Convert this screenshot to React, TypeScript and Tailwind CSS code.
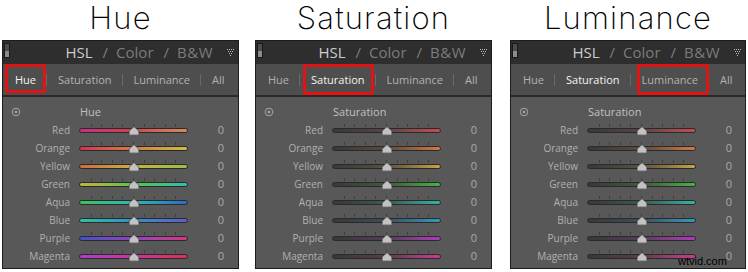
import React from "react";

type Row = { name: string; grad: string };

const hueRows: Row[] = [
  { name: "Red", grad: "bg-linear-to-r from-[#c82e7e] via-[#d0424c] to-[#d08c5e]" },
  { name: "Orange", grad: "bg-linear-to-r from-[#d6304e] via-[#d47a42] to-[#c8c040]" },
  { name: "Yellow", grad: "bg-linear-to-r from-[#d06a40] via-[#c8b040] to-[#98c048]" },
  { name: "Green", grad: "bg-linear-to-r from-[#bab63e] via-[#58c050] to-[#30c0a6]" },
  { name: "Aqua", grad: "bg-linear-to-r from-[#40c05a] via-[#30b8b0] to-[#3068c4]" },
  { name: "Blue", grad: "bg-linear-to-r from-[#30c0a0] via-[#3090c8] to-[#5c5cc6]" },
  { name: "Purple", grad: "bg-linear-to-r from-[#4050c8] via-[#9040c0] to-[#d83080]" },
  { name: "Magenta", grad: "bg-linear-to-r from-[#a640c6] via-[#d030a0] to-[#d83052]" },
];

const satRows: Row[] = [
  { name: "Red", grad: "bg-linear-to-r from-[#383838] via-[#5a4446] to-[#c84a52]" },
  { name: "Orange", grad: "bg-linear-to-r from-[#383838] via-[#5c4a3e] to-[#d27a42]" },
  { name: "Yellow", grad: "bg-linear-to-r from-[#383838] via-[#5a523e] to-[#caa440]" },
  { name: "Green", grad: "bg-linear-to-r from-[#383838] via-[#3e5a3e] to-[#44b444]" },
  { name: "Aqua", grad: "bg-linear-to-r from-[#383838] via-[#3a5854] to-[#30b4a4]" },
  { name: "Blue", grad: "bg-linear-to-r from-[#383838] via-[#3a5058] to-[#3298c2]" },
  { name: "Purple", grad: "bg-linear-to-r from-[#383838] via-[#543c58] to-[#b634c2]" },
  { name: "Magenta", grad: "bg-linear-to-r from-[#383838] via-[#583c4c] to-[#d43690]" },
];

const tabs = ["Hue", "Saturation", "Luminance", "All"];

function Thumb() {
  return (
    <svg
      width="11"
      height="10"
      viewBox="0 0 11 10"
      className="absolute left-1/2 top-[5px] -translate-x-1/2"
    >
      <path
        d="M5.5 0.6 L10.4 5 L10.4 8.6 Q10.4 9.4 9.6 9.4 L1.4 9.4 Q0.6 9.4 0.6 8.6 L0.6 5 Z"
        fill="#c2c2c2"
        stroke="#3c3c3c"
        strokeWidth="0.7"
      />
      <path d="M1.2 8.6 L9.8 8.6" stroke="#8e8e8e" strokeWidth="0.8" />
    </svg>
  );
}

function Slider({ grad }: { grad: string }) {
  return (
    <div className="relative w-[109px] h-[18px] flex flex-col pt-[3px] gap-[1px]">
      <div className="h-[3px] flex justify-evenly px-[2px]">
        {Array.from({ length: 9 }).map((_, i) => (
          <div key={i} className="w-px h-[3px] bg-[#3e3e3e]" />
        ))}
      </div>
      <div className={`h-[5px] rounded-full border border-[#2a2a2a] ${grad}`} />
      <Thumb />
    </div>
  );
}

function TargetIcon() {
  return (
    <svg width="10" height="10" viewBox="0 0 10 10">
      <circle cx="5" cy="5" r="3.8" fill="none" stroke="#a6a6a6" strokeWidth="1" />
      <circle cx="5" cy="5" r="1.3" fill="#a6a6a6" />
    </svg>
  );
}

function DotTriangle() {
  const dots: [number, number][] = [
    [0, 0], [2, 0], [4, 0], [6, 0],
    [1, 2], [3, 2], [5, 2],
    [2, 4], [4, 4],
    [3, 6],
  ];
  return (
    <svg width="7" height="7" viewBox="0 0 7 7">
      {dots.map(([x, y], i) => (
        <rect key={i} x={x} y={y} width="1" height="1" fill="#b8b8b8" />
      ))}
    </svg>
  );
}

function Panel({
  width,
  heading,
  rows,
  active,
  boxClass,
}: {
  width: string;
  heading: string;
  rows: Row[];
  active: number;
  boxClass: string;
}) {
  return (
    <div
      className={`${width} border border-[#1c1c1c] bg-[#585858] font-['Open_Sans',sans-serif] flex flex-col`}
    >
      {/* header */}
      <div className="h-[23px] bg-[#2e2e2e] flex items-start">
        <div className="mt-[2px] ml-[1px] w-[6px] h-[15px] border border-[#1a1a1a] flex flex-col">
          <div className="flex-1 bg-[#4c4c4c]" />
          <div className="flex-1 bg-[#8c8c8c]" />
        </div>
        <div className="flex-1 flex justify-end items-center h-[23px] text-[15px] leading-[23px] text-[#7c7c7c]">
          <span className="text-[#cdcdcd]">HSL</span>
          <span className="ml-[10px]">/</span>
          <span className="ml-[8px]">Color</span>
          <span className="ml-[10px]">/</span>
          <span className="ml-[8px] tracking-[0.5px]">B&amp;W</span>
          <div className="ml-[14px] mr-[4px] flex items-center">
            <DotTriangle />
          </div>
        </div>
      </div>
      {/* tabs */}
      <div className="relative h-[33px] bg-[#4e4e4e] border-b-2 border-[#2a2a2a] flex items-center pl-[12px] text-[11px] leading-[15px]">
        {tabs.map((t, i) => (
          <React.Fragment key={t}>
            {i > 0 && <div className="w-px h-[12px] bg-[#686868] ml-[10px] mr-[11px]" />}
            <span className={i === active ? "text-[#f4f4f4] font-medium" : "text-[#b2b2b2]"}>{t}</span>
          </React.Fragment>
        ))}
        <div
          className={`absolute ${boxClass} border-[3px] border-[#e01414] rounded-[2px]`}
        />
      </div>
      {/* content */}
      <div className="flex flex-col pt-[6px] pb-[3px]">
        <div className="h-[18px] flex items-center">
          <div className="ml-[8px] w-[10px] flex items-center">
            <TargetIcon />
          </div>
          <span className="ml-[59px] text-[11px] leading-[18px] text-[#c0c0c0]">{heading}</span>
        </div>
        {rows.map((r) => (
          <div key={r.name} className="h-[18px] flex items-center">
            <div className="w-[67px] text-right text-[10px] leading-[18px] text-[#b0b0b0]">
              {r.name}
            </div>
            <div className="ml-[9px]">
              <Slider grad={r.grad} />
            </div>
            <div className="w-[36px] text-right text-[11px] leading-[18px] text-[#aaaaaa]">0</div>
          </div>
        ))}
      </div>
    </div>
  );
}

export default function App() {
  return (
    <div className="relative w-[748px] h-[272px] bg-white overflow-hidden">
      <div className="flex">
        <div className="ml-[2px] flex flex-col">
          <div className="h-[40px] text-center font-['Inter',sans-serif] font-extralight text-[31px] leading-[36px] tracking-[1.2px] text-black">
            Hue
          </div>
          <Panel
            width="w-[237px]"
            heading="Hue"
            rows={hueRows}
            active={0}
            boxClass="left-[2px] top-0 w-[41px] h-[29px]"
          />
        </div>
        <div className="ml-[16px] flex flex-col">
          <div className="h-[40px] text-center font-['Inter',sans-serif] font-extralight text-[31px] leading-[36px] tracking-[1.2px] text-black">
            Saturation
          </div>
          <Panel
            width="w-[237px]"
            heading="Saturation"
            rows={satRows}
            active={1}
            boxClass="left-[47px] top-0 w-[71px] h-[31px]"
          />
        </div>
        <div className="ml-[18px] flex flex-col">
          <div className="h-[40px] text-center font-['Inter',sans-serif] font-extralight text-[31px] leading-[36px] tracking-[1.2px] text-black">
            Luminance
          </div>
          <Panel
            width="w-[236px]"
            heading="Saturation"
            rows={satRows}
            active={1}
            boxClass="left-[126px] top-0 w-[72px] h-[31px]"
          />
        </div>
      </div>
      <div className="absolute left-[678px] top-[254px] text-[11px] leading-[14px] text-black font-['Liberation_Sans',sans-serif]">
        wtvid.com
      </div>
    </div>
  );
}
